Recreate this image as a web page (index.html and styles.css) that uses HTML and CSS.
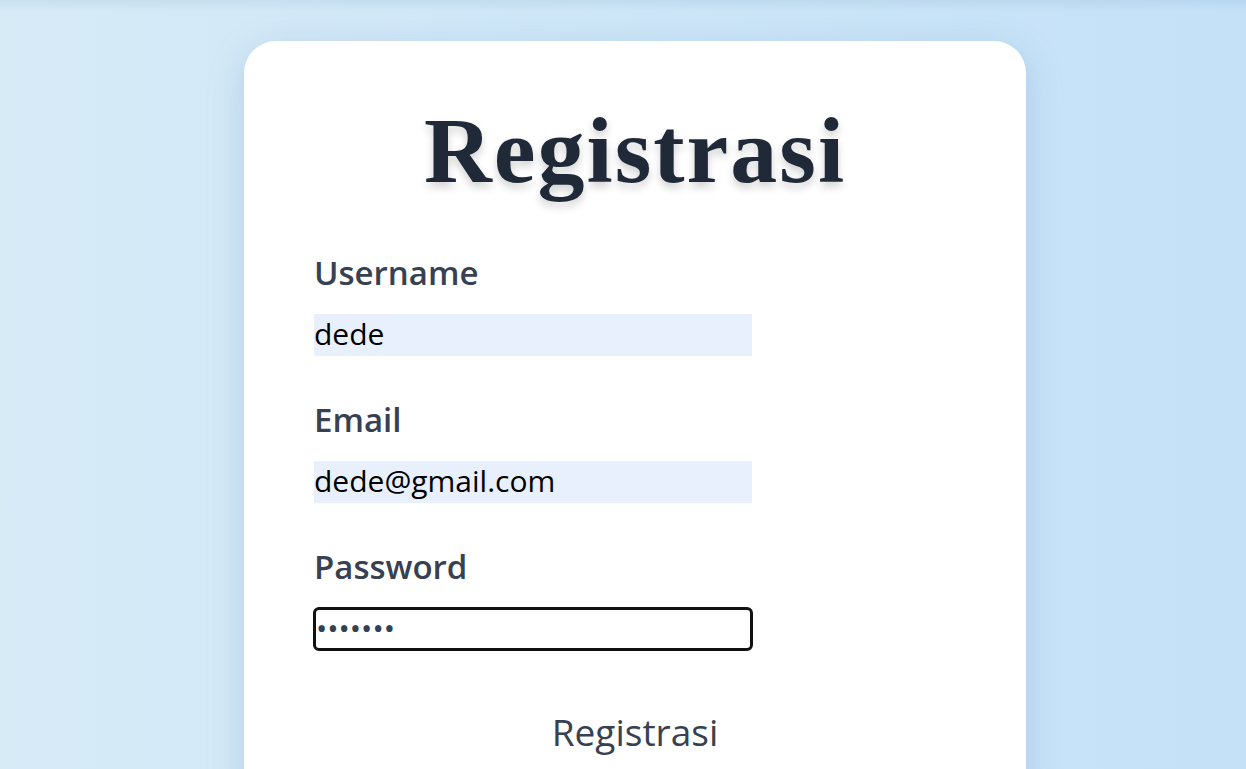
FILE: index.html
```html
<!DOCTYPE html>
<html lang="id">
<head>
<meta charset="utf-8">
<title>Registrasi</title>
<link rel="stylesheet" href="styles.css">
</head>
<body>
<main class="page">
  <section class="card">
    <h1 class="title">Registrasi</h1>
    <form class="form">
      <div class="field">
        <label class="label" for="username">Username</label>
        <input class="input" id="username" type="text" value="dede">
      </div>
      <div class="field">
        <label class="label" for="email">Email</label>
        <input class="input" id="email" type="email" value="dede@gmail.com">
      </div>
      <div class="field">
        <label class="label" for="password">Password</label>
        <input class="input input-focus" id="password" type="password" value="dede123">
      </div>
      <div class="actions">
        <button class="btn" type="button">Registrasi</button>
      </div>
    </form>
  </section>
</main>
</body>
</html>
```

FILE: styles.css
```css
html, body {
  margin: 0;
  padding: 0;
  height: 100%;
  overflow: hidden;
}

body {
  background:
    linear-gradient(to bottom, rgba(40, 90, 130, 0.08), rgba(40, 90, 130, 0) 12px),
    linear-gradient(to right, #d7ebf7, #c4e1f8);
  font-family: "Open Sans", "DejaVu Sans", sans-serif;
}

.page {
  display: flex;
  justify-content: center;
  padding: 41px 0 0 24px;
}

.card {
  width: 782px;
  box-sizing: border-box;
  background: #ffffff;
  border-radius: 32px;
  box-shadow: 0 10px 36px rgba(90, 140, 190, 0.28);
  padding: 55px 70px 80px;
}

.title {
  margin: 0;
  text-align: center;
  font-family: "Liberation Serif", "Times New Roman", serif;
  font-weight: 700;
  font-size: 94px;
  letter-spacing: 2px;
  line-height: normal;
  color: #1f2937;
  text-shadow: 0 5px 8px rgba(0, 0, 0, 0.18);
}

.form {
  margin-top: 49px;
  display: flex;
  flex-direction: column;
}

.field {
  display: flex;
  flex-direction: column;
  align-items: flex-start;
  margin-bottom: 44px;
}

.label {
  font-family: "Open Sans", sans-serif;
  font-weight: 600;
  font-size: 33px;
  line-height: 40px;
  color: #374151;
  margin: 0 0 21px;
}

.input {
  width: 438px;
  height: 42px;
  box-sizing: border-box;
  margin: 0;
  padding: 0 0 4px;
  border: none;
  background: #e8f0fe;
  font-family: "Open Sans", sans-serif;
  font-size: 30px;
  color: #000000;
  outline: none;
}

.input-focus {
  background: #ffffff;
  padding-left: 2px;
  color: #334155;
  outline: 3px solid #111111;
  outline-offset: -2px;
  border-radius: 5px;
}

.actions {
  display: flex;
  justify-content: center;
  margin-top: 12px;
}

.btn {
  background: none;
  border: none;
  padding: 0;
  font-family: "Open Sans", sans-serif;
  font-size: 37px;
  line-height: normal;
  font-weight: 400;
  color: #374151;
  cursor: pointer;
}
```
